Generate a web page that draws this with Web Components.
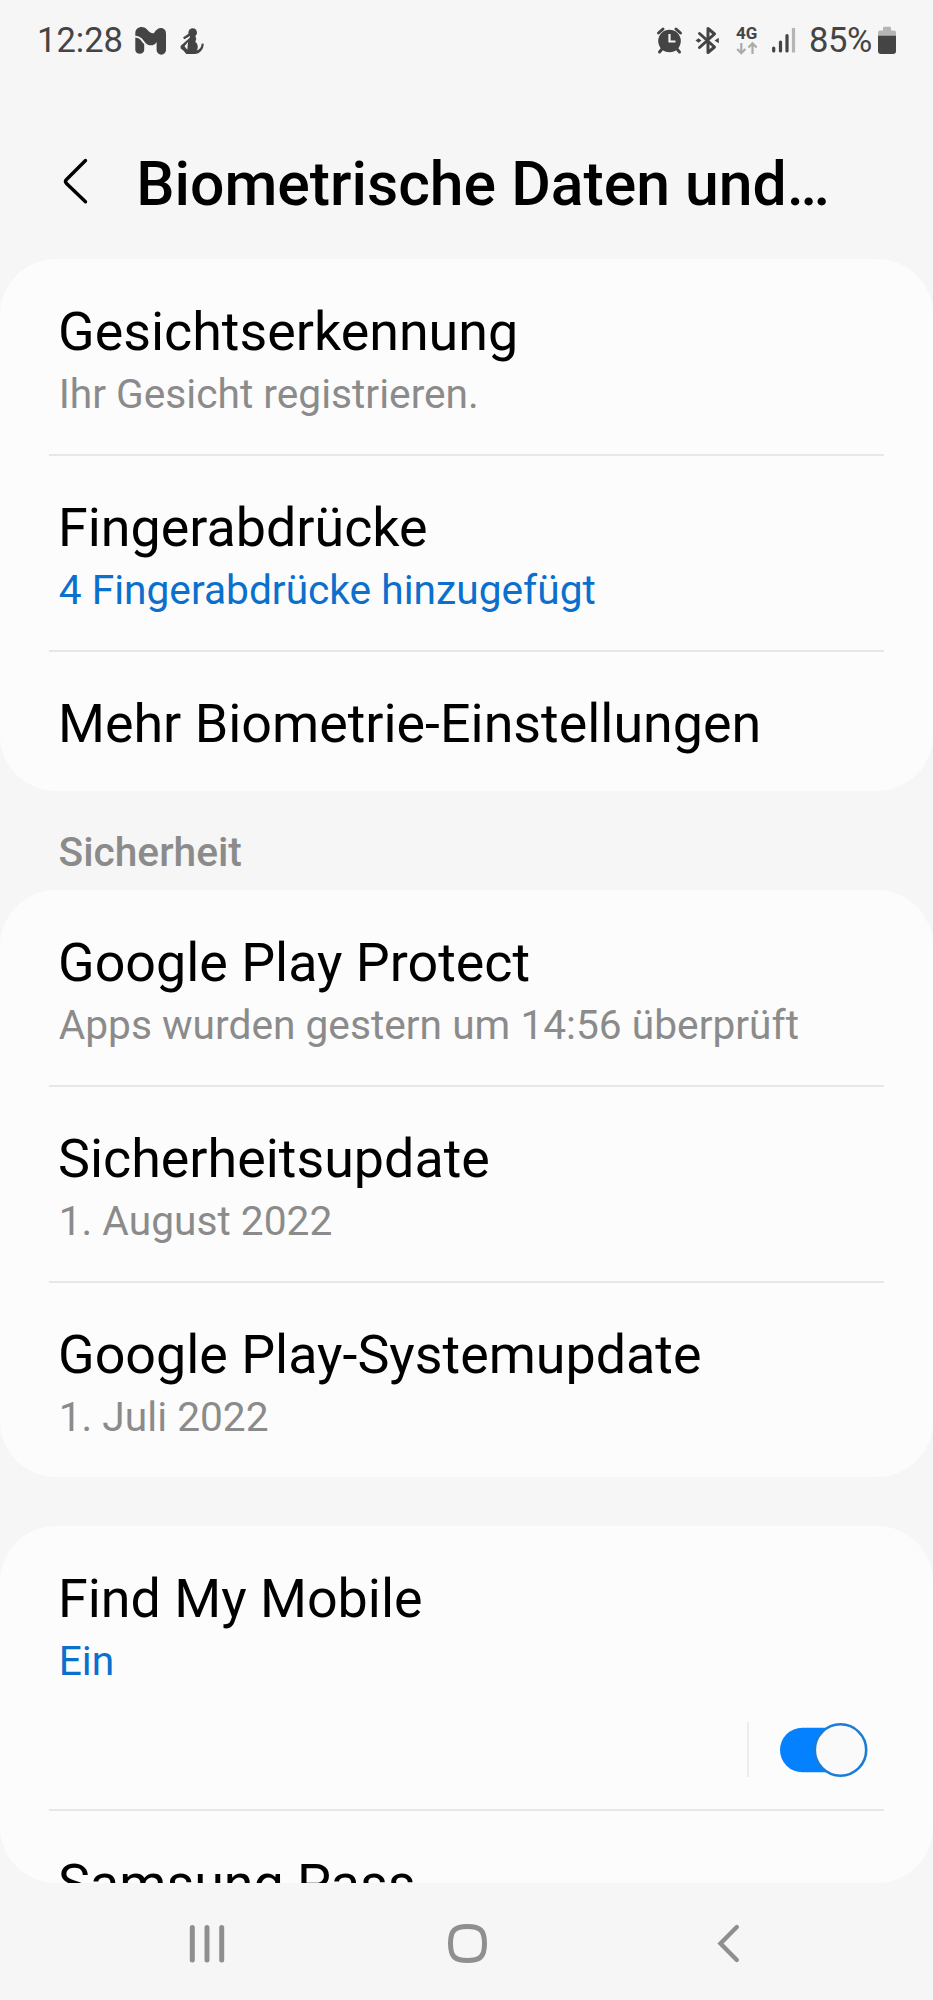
<!DOCTYPE html>
<html lang="de">
<head>
<meta charset="utf-8">
<title>Biometrische Daten und Sicherheit</title>
<style>
  html, body { margin: 0; background: #f6f6f6; }
</style>
</head>
<body>
<settings-screen>
  <status-bar slot="status" time="12:28" battery="85%"></status-bar>
  <title-bar slot="header">Biometrische Daten und…</title-bar>
  <settings-card>
    <settings-row>Gesichtserkennung<span slot="sub">Ihr Gesicht registrieren.</span></settings-row>
    <settings-row accent>Fingerabdrücke<span slot="sub">4 Fingerabdrücke hinzugefügt</span></settings-row>
    <settings-row single last>Mehr Biometrie-Einstellungen</settings-row>
  </settings-card>
  <section-title>Sicherheit</section-title>
  <settings-card>
    <settings-row>Google Play Protect<span slot="sub">Apps wurden gestern um 14:56 überprüft</span></settings-row>
    <settings-row>Sicherheitsupdate<span slot="sub">1. August 2022</span></settings-row>
    <settings-row last>Google Play-Systemupdate<span slot="sub">1. Juli 2022</span></settings-row>
  </settings-card>
  <settings-card gap>
    <settings-row accent tall>Find My Mobile<span slot="sub">Ein</span><toggle-switch slot="control"></toggle-switch></settings-row>
    <settings-row single last>Samsung Pass</settings-row>
  </settings-card>
  <nav-bar slot="nav"></nav-bar>
</settings-screen>
<script>
const define = (name, html) => customElements.define(name, class extends HTMLElement {
  constructor() {
    super();
    const t = document.createElement('template');
    t.innerHTML = html;
    this.attachShadow({ mode: 'open' }).append(t.content.cloneNode(true));
  }
  connectedCallback() {
    this.shadowRoot.querySelectorAll('[data-attr]').forEach(e => {
      e.textContent = this.getAttribute(e.dataset.attr);
    });
  }
});

define('settings-screen', `
<style>
  :host { display: flex; flex-direction: column; width: 933px; height: 2000px; background: #f6f6f6; color: #000; font-family: Roboto, sans-serif; overflow: hidden; }
  main { height: 1624px; overflow: hidden; border-radius: 0 0 56px 56px; flex: none; }
</style>
<slot name="status"></slot><slot name="header"></slot>
<main><slot></slot></main>
<slot name="nav"></slot>`);

define('status-bar', `
<style>
  :host { display: flex; justify-content: space-between; height: 80px; padding: 0 36px 0 37px; box-sizing: border-box; color: #444; font-size: 34.500px; line-height: 80px; flex: none; }
  div { display: flex; }
  svg { display: block; flex: none; }
  .time { width: 93px; }
  .bat { width: 65px; letter-spacing: -.4px; }
</style>
<div>
  <span class="time" data-attr="time"></span>
  <svg width="80" height="80" viewBox="130 0 80 80" fill="#444">
    <path d="M135.300 37.500c3.500.3 5.200 2 6.500 4 .8 1.200 1.500 1.700 2.400 2.400V50a4.500 4.500 0 0 1-8.900 0z"/>
    <path d="M135.300 35.800v-2.500c0-6.500 7.700-8 11.500-4 2.800 3 5 4.500 7.200 3.700 2.500-4.500 6-5.500 8.500-4.700 2.300.8 3.500 2.700 3.500 5.200V50a4.700 4.700 0 0 1-9.400 0v-8c-2 4-8 4.600-11.200.8-2.800-3.600-4.800-6.700-10.100-7z"/>
    <circle cx="192.700" cy="32.500" r="4.300"/>
    <path d="M189.500 33l-6.500 4.500 1.300 1.700 6-3.500zM190.500 35h4.500l1.300 4-1 3c3 2 3 6 1.500 8.500 3-1 4.700-3.500 4.900-7l2 .3c-.1 6-4 10.200-9 10.200h-8.500c-1.500-2-3-4-5.500-5.500L180.500 46l9-8zM188 42l-3.500 4.300 2.800 3.500z" fill-rule="evenodd"/>
  </svg>
</div>
<div>
  <svg width="159" height="80" viewBox="650 0 159 80" fill="#444">
    <circle cx="669.500" cy="41" r="11.300"/>
    <path d="M658.500 33l4.500-4M680.500 33l-4.500-4M662 49l-2.500 3M677 49l2.500 3" stroke="#444" stroke-width="3" stroke-linecap="round"/>
    <path d="M669.500 34v7.500h6" fill="none" stroke="#f6f6f6" stroke-width="2.200"/>
    <path d="M699.500 33.500l15 13.500-6.500 5.500V28.500l6.500 5.500-15 13.500" fill="none" stroke="#444" stroke-width="3" stroke-linecap="round" stroke-linejoin="round"/>
    <path d="M695.500 40.500l3-2.200 3 2.200-3 2.200zM714.500 40.500l4.300-2.700v5.400z"/>
    <text x="736" y="39.300" font-family="Roboto, sans-serif" font-size="17" font-weight="700">4G</text>
    <path d="M741.300 43v10M737.200 49l4.100 4.200 4.100-4.200M752.500 54V44M748.400 47.500l4.100-4.200 4.100 4.200" fill="none" stroke="#aaa" stroke-width="2.200"/>
    <path d="M773.700 48v3M780.500 42v9M787 35.500V51" stroke="#444" stroke-width="3.200" stroke-linecap="round"/>
    <path d="M793.500 28v24.500" stroke="#b5b5b5" stroke-width="3.200"/>
  </svg>
  <span class="bat" data-attr="battery"></span>
  <svg width="23" height="80" viewBox="874 0 23 80">
    <path d="M878 36v-3.500q0-2 2-2h3V28q0-1.200 1.200-1.200h5.600Q891 26.800 891 28v2.500h3q2 0 2 2V36z" fill="#b5b5b5"/>
    <path d="M878 35.800h18V51q0 3-3 3h-12q-3 0-3-3z" fill="#444"/>
  </svg>
</div>`);

define('title-bar', `
<style>
  :host { display: flex; height: 179px; flex: none; font-weight: 500; font-size: 60.700px; line-height: 72px; padding: 69px 0 0 61px; box-sizing: border-box; white-space: nowrap; }
  svg { display: block; flex: none; margin-right: 45.200px; }
</style>
<svg width="30" height="72" viewBox="61 149 30 72"><path d="M85.500 160.500L66.500 179.500q-2 2 0 4L85.500 201.800" fill="none" stroke="#000" stroke-width="3.400" stroke-linecap="round"/></svg>
<slot></slot>`);

define('settings-card', `
<style>
  :host { display: block; background: #fcfcfc; border-radius: 56px; }
  :host([gap]) { margin-top: 49px; }
</style>
<slot></slot>`);

define('settings-row', `
<style>
  :host { display: block; position: relative; height: 196px; padding: 38px 59px 0 58px; box-sizing: border-box; white-space: nowrap; }
  :host([last]) { height: 195px; }
  :host([single]) { height: 140px; }
  :host([tall]) { height: 285px; }
  .title { font-size: 53.800px; line-height: 70px; }
  .sub { font-size: 40.700px; line-height: 55px; padding-left: .7px; color: #8b8b8b; }
  :host([accent]) .sub { color: #0b6fcc; }
  .control { display: flex; justify-content: flex-end; margin: 33px 4px 0 0; }
  hr { position: absolute; left: 49px; right: 49px; bottom: -1px; height: 2px; margin: 0; border: 0; background: #e7e7e7; }
  :host([tall]) hr { bottom: 0; }
  :host([last]) hr, :host([single]) .sub { display: none; }
</style>
<div class="title"><slot></slot></div>
<div class="sub"><slot name="sub"></slot></div>
<div class="control"><slot name="control"></slot></div>
<hr>`);

define('toggle-switch', `
<style>:host { display: block; } svg { display: block; }</style>
<svg width="126" height="56" viewBox="744 1722 126 56">
  <path d="M748 1722v55" stroke="#e7e7e7" stroke-width="1.500"/>
  <rect x="780" y="1727.700" width="86" height="44.600" rx="22.300" fill="#0381fe"/>
  <circle cx="840.500" cy="1750" r="25.700" fill="#fafafa" stroke="#1b7cd6" stroke-width="2.600"/>
</svg>`);

define('section-title', `
<style>:host { display: block; height: 99px; padding: 34px 58.500px 0; box-sizing: border-box; font-size: 40.700px; font-weight: 500; line-height: 55px; color: #8b8b8b; }</style>
<slot></slot>`);

define('nav-bar', `
<style>:host { display: flex; flex: 1; align-items: center; padding: 4px 0 0 187px; } svg { display: block; flex: none; } .home { margin: 0 225px 0 218px; }</style>
<svg width="40" height="44" viewBox="187 1922 40 44"><path d="M192.300 1927.500v32.500M207 1927.500v32.500M221.700 1927.500v32.500" stroke="#8f8f8f" stroke-width="5" stroke-linecap="round"/></svg>
<svg class="home" width="44" height="44" viewBox="445 1922 44 44"><path d="M467.500 1926.500c13 0 17 4 17 17s-4 17-17 17-17-4-17-17 4-17 17-17z" fill="none" stroke="#8f8f8f" stroke-width="5"/></svg>
<svg width="28" height="44" viewBox="714 1922 28 44"><path d="M736.800 1927L720.500 1943.500 736.800 1960" fill="none" stroke="#8f8f8f" stroke-width="4.400" stroke-linecap="round"/></svg>`);
</script>
</body>
</html>
